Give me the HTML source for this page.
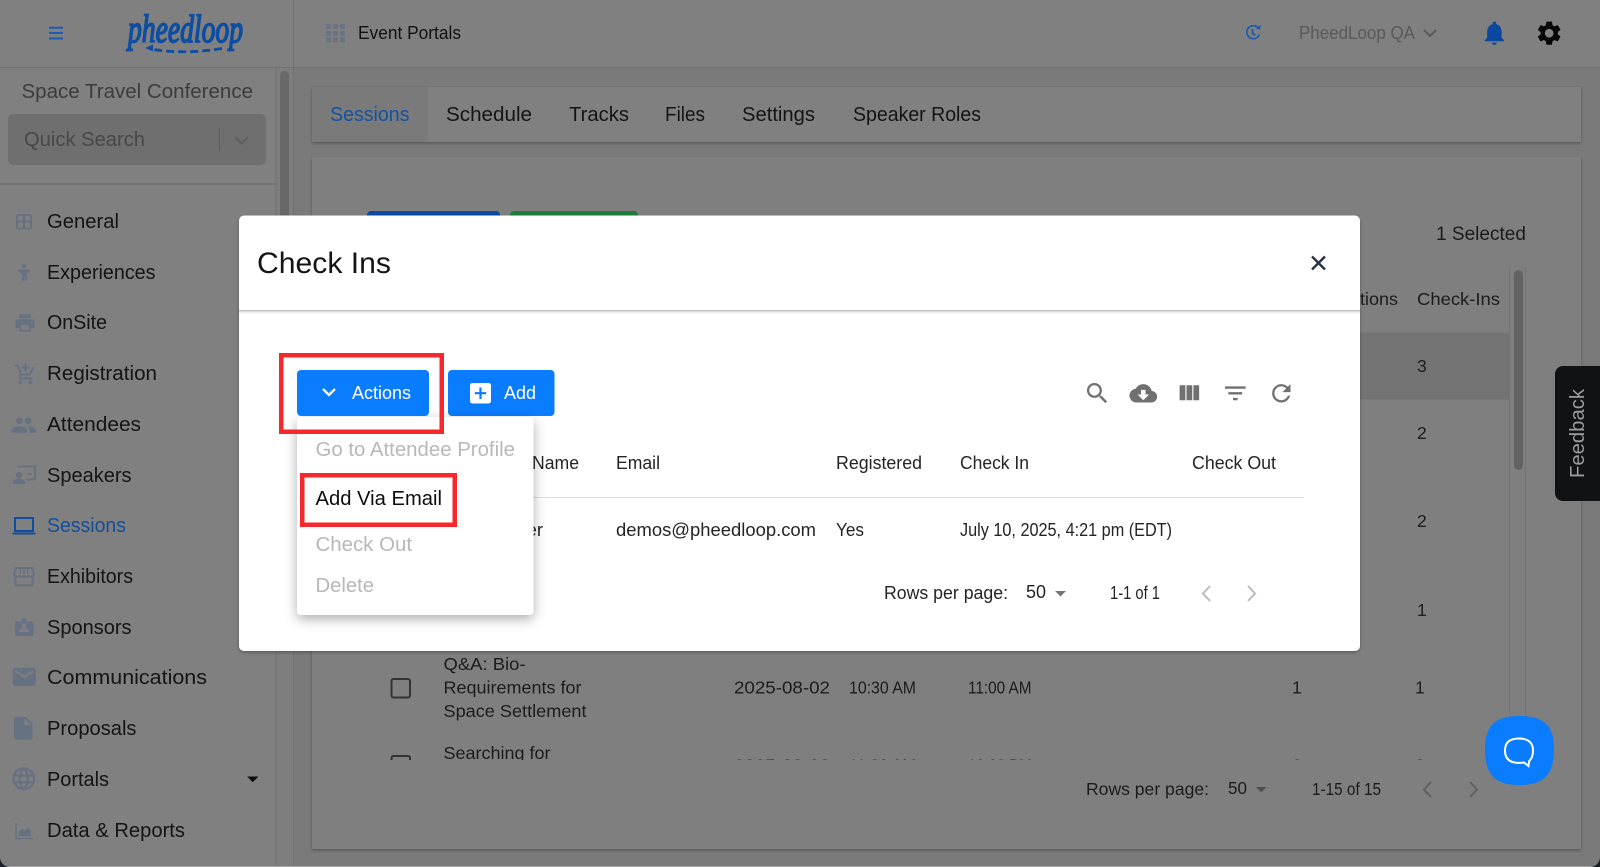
<!DOCTYPE html>
<html lang="en">
<head>
<meta charset="utf-8">
<title>Check Ins</title>
<style>
html,body{margin:0;padding:0;width:1600px;height:867px;overflow:hidden;background:#7a7a7a}
svg{display:block}
text{font-family:"Liberation Sans",sans-serif;font-size:19px;fill:#161616}
.nav{font-size:20.5px;fill:#141414}
.tab{font-size:20.5px;fill:#141414}
.m{font-size:18px;fill:#242424}
.bg{font-size:17.5px;fill:#1c1c1c}
.dis{font-size:20px;fill:#b8b8b8}
.ic{fill:#667282}
</style>
</head>
<body>
<svg xmlns="http://www.w3.org/2000/svg" width="1600" height="867" viewBox="0 0 1600 867">
<defs>
<filter id="s1" x="-5%" y="-5%" width="110%" height="110%"><feDropShadow dx="0" dy="1.5" stdDeviation="1.5" flood-color="#000" flood-opacity=".3"/></filter>
<filter id="s2" x="-15%" y="-15%" width="130%" height="135%"><feDropShadow dx="0" dy="4" stdDeviation="6" flood-color="#000" flood-opacity=".32"/></filter>
<clipPath id="tbl"><rect x="312" y="640" width="1197" height="120"/></clipPath>
</defs>

<!-- backdrop -->
<rect width="1600" height="867" fill="#7a7a7a"/>
<!-- header + sidebar -->
<rect width="1600" height="67" fill="#808080"/>
<rect y="67" width="1600" height="1" fill="#737373"/>
<rect x="293" y="0" width="1" height="67" fill="#737373"/>
<rect y="68" width="276" height="799" fill="#808080"/>
<rect x="275.500" y="68" width="1" height="799" fill="#737373"/>
<rect x="293" y="68" width="1" height="799" fill="#717171"/>
<rect x="276.500" y="68" width="16.500" height="799" fill="#7e7e7e"/>
<rect x="280" y="71" width="9" height="300" rx="4.500" fill="#686868"/>
<rect y="183" width="276" height="2" fill="#747474"/>

<!-- top bar -->
<path d="M49 27.700h14M49 33h14M49 38.500h14" stroke="#1a5cb4" stroke-width="2"/>
<text x="128" y="42" textLength="115" lengthAdjust="spacingAndGlyphs" style="font-family:'Liberation Serif',serif;font-style:italic;font-size:39px;fill:#0e4ea2;stroke:#0e4ea2;stroke-width:1.700">pheedloop</text>
<path d="M222 48.500Q186 54.500 153 49.500" fill="none" stroke="#0e4ea2" stroke-width="2.800" stroke-dasharray="8 4"/>
<path d="M145 48l8-3.500v7z" fill="#0e4ea2"/>
<g fill="#6a7482">
<rect x="326" y="24" width="5" height="5"/><rect x="333" y="24" width="5" height="5"/><rect x="340" y="24" width="5" height="5"/>
<rect x="326" y="31" width="5" height="5"/><rect x="333" y="31" width="5" height="5"/><rect x="340" y="31" width="5" height="5"/>
<rect x="326" y="37.500" width="5" height="5"/><rect x="333" y="37.500" width="5" height="5"/><rect x="340" y="37.500" width="5" height="5"/>
</g>
<text x="358" y="39" textLength="103" lengthAdjust="spacingAndGlyphs" style="font-size:18px;fill:#111">Event Portals</text>
<path d="M1259 29a6.500 6.500 0 1 0 .4 5.500M1252.500 29v4.500l3 1.500" fill="none" stroke="#1a5cb4" stroke-width="1.700"/>
<path d="M1255.500 28.500l4.500 1.200.8-4.700z" fill="#1a5cb4"/>
<text x="1299" y="39" textLength="116" lengthAdjust="spacingAndGlyphs" style="font-size:18.500px;fill:#5a5a5a">PheedLoop QA</text>
<path d="M1424 30l6 6 6-6" fill="none" stroke="#5a5a5a" stroke-width="2"/>
<g transform="translate(1480 18.500) scale(1.2)" fill="#0c479f"><path d="M12 22c1.100 0 2-.9 2-2h-4c0 1.100.89 2 2 2zm6-6v-5c0-3.070-1.640-5.640-4.500-6.320V4c0-.83-.67-1.500-1.500-1.500s-1.500.67-1.500 1.500v.68C7.630 5.360 6 7.920 6 11v5l-2 2v1h16v-1l-2-2z"/></g>
<g transform="translate(1534.800 18.800) scale(1.2)" fill="#050505"><path d="M19.140 12.940c.04-.3.06-.61.06-.94 0-.32-.02-.64-.07-.94l2.030-1.580a.49.49 0 0 0 .12-.61l-1.920-3.320a.488.488 0 0 0-.59-.22l-2.390.96c-.5-.38-1.030-.7-1.620-.94l-.36-2.540a.484.484 0 0 0-.48-.41h-3.840c-.24 0-.43.17-.47.41l-.36 2.540c-.59.24-1.130.57-1.620.94l-2.390-.96c-.22-.08-.47 0-.59.22L2.740 8.870c-.12.21-.08.47.12.61l2.030 1.580c-.05.3-.09.63-.09.94s.02.64.07.94l-2.030 1.580a.49.49 0 0 0-.12.61l1.920 3.320c.12.22.37.29.59.22l2.390-.96c.5.38 1.030.7 1.620.94l.36 2.540c.05.24.24.41.48.41h3.840c.24 0 .44-.17.47-.41l.36-2.540c.59-.24 1.130-.56 1.620-.94l2.390.96c.22.08.47 0 .59-.22l1.920-3.320c.12-.22.07-.47-.12-.61l-2.010-1.580zM12 15.600c-1.980 0-3.600-1.620-3.600-3.600s1.620-3.600 3.600-3.600 3.600 1.620 3.600 3.600-1.620 3.600-3.600 3.600z"/></g>

<!-- sidebar head -->
<text x="21.500" y="98" textLength="231.500" lengthAdjust="spacingAndGlyphs" style="font-size:20.500px;fill:#3c3c3c">Space Travel Conference</text>
<rect x="8" y="114" width="258" height="51" rx="5" fill="#6f6f6f"/>
<text x="24" y="146" textLength="121" lengthAdjust="spacingAndGlyphs" style="font-size:20.500px;fill:#484848">Quick Search</text>
<rect x="219" y="128" width="1" height="23" fill="#5e5e5e"/>
<path d="M235 137l6.500 6.500 6.500-6.500" fill="none" stroke="#5e5e5e" stroke-width="1.800"/>

<!-- sidebar nav -->
<text class="nav" x="47" y="228" textLength="72" lengthAdjust="spacingAndGlyphs">General</text>
<text class="nav" x="47" y="279" textLength="108.500" lengthAdjust="spacingAndGlyphs">Experiences</text>
<text class="nav" x="47" y="329" textLength="60" lengthAdjust="spacingAndGlyphs">OnSite</text>
<text class="nav" x="47" y="380" textLength="110" lengthAdjust="spacingAndGlyphs">Registration</text>
<text class="nav" x="47" y="431" textLength="94" lengthAdjust="spacingAndGlyphs">Attendees</text>
<text class="nav" x="47" y="482" textLength="84.500" lengthAdjust="spacingAndGlyphs">Speakers</text>
<text class="nav" x="47" y="532" textLength="79" lengthAdjust="spacingAndGlyphs" style="fill:#144e98">Sessions</text>
<text class="nav" x="47" y="583" textLength="86" lengthAdjust="spacingAndGlyphs">Exhibitors</text>
<text class="nav" x="47" y="634" textLength="84.500" lengthAdjust="spacingAndGlyphs">Sponsors</text>
<text class="nav" x="47" y="684" textLength="160" lengthAdjust="spacingAndGlyphs">Communications</text>
<text class="nav" x="47" y="735" textLength="89.500" lengthAdjust="spacingAndGlyphs">Proposals</text>
<text class="nav" x="47" y="786" textLength="62" lengthAdjust="spacingAndGlyphs">Portals</text>
<text class="nav" x="47" y="837" textLength="138" lengthAdjust="spacingAndGlyphs">Data &amp; Reports</text>
<path d="M247 776.500h11.500l-5.750 5.750z" fill="#0e0e0e"/>

<!-- sidebar icons -->
<g fill="none" stroke="#667282" stroke-width="2"><rect x="17" y="215" width="14" height="13.500" rx="1.500"/><path d="M24 215v13.500M17 221.500h14"/></g>
<g class="ic"><circle cx="24" cy="266" r="2.300"/><path d="M18.500 269.500h11v2.500l-2.700 1.500v7.500h-2v-5h-.8v5h-2v-7.500l-3.500-1.500z"/></g>
<g class="ic" transform="translate(13.500 311.500) scale(.96)"><path d="M19 8H5c-1.660 0-3 1.340-3 3v6h4v4h12v-4h4v-6c0-1.660-1.340-3-3-3zm-3 11H8v-5h8v5zm3-7c-.55 0-1-.45-1-1s.45-1 1-1 1 .45 1 1-.45 1-1 1zm-1-9H6v4h12V3z"/></g>
<g class="ic" transform="translate(13.500 362.500)"><path d="M11 9h2V6h3V4h-3V1h-2v3H8v2h3v3zm-4 9c-1.100 0-1.990.9-1.990 2S5.900 22 7 22s2-.9 2-2-.9-2-2-2zm10 0c-1.100 0-1.990.9-1.990 2s.89 2 1.990 2 2-.9 2-2-.9-2-2-2zm-9.830-3.250l.03-.12.9-1.630h7.450c.75 0 1.410-.41 1.750-1.030l3.860-7.010L19.420 4h-.01l-1.100 2-2.760 5H8.530l-.13-.27L6.160 6l-.95-2-.94-2H1v2h2l3.600 7.590-1.350 2.450c-.16.28-.25.61-.25.96 0 1.100.9 2 2 2h12v-2H7.420c-.13 0-.25-.11-.25-.25z"/></g>
<g class="ic" transform="translate(10.500 412) scale(1.100)"><path d="M16 11c1.660 0 2.990-1.340 2.990-3S17.660 5 16 5c-1.660 0-3 1.340-3 3s1.340 3 3 3zm-8 0c1.660 0 2.990-1.340 2.990-3S9.660 5 8 5C6.340 5 5 6.340 5 8s1.340 3 3 3zm0 2c-2.330 0-7 1.170-7 3.500V19h14v-2.500c0-2.330-4.670-3.500-7-3.500zm8 0c-.29 0-.62.02-.97.05 1.160.84 1.970 1.970 1.970 3.450V19h6v-2.500c0-2.330-4.670-3.500-7-3.500z"/></g>
<g fill="none" stroke="#667282" stroke-width="2"><path d="M19 468v-1.500h16v13h-8"/></g>
<g class="ic"><circle cx="19" cy="475" r="3.200"/><path d="M13 484v-2c0-2 3-3.500 6-3.500s6 1.500 6 3.500v2z"/><rect x="28" y="473" width="4" height="2"/></g>
<g transform="translate(12 513)" fill="none" stroke="#0e4ea0"><rect x="3" y="5" width="18" height="13" stroke-width="2"/><path d="M.5 20.500h23" stroke-width="2"/></g>
<g fill="none" stroke="#667282" stroke-width="2"><path d="M15.500 576v8.500a1 1 0 0 0 1 1h15a1 1 0 0 0 1-1V576"/><path d="M16 568h16l2 6.500a3 3 0 0 1-5 1.500 4 4 0 0 1-5 0 4 4 0 0 1-5 0 3 3 0 0 1-5-1.500z"/><path d="M20.500 568.500v6M24 568.500v6M27.500 568.500v6" stroke-width="1.200"/></g>
<g class="ic"><path d="M15.500 621.500h6v-3h5v3h6a1.500 1.500 0 0 1 1 1.500v11.500a1.500 1.500 0 0 1-1.500 1.500h-15.500a1.500 1.500 0 0 1-1.500-1.500V623a1.500 1.500 0 0 1 .5-1.500z"/></g>
<circle cx="24" cy="625.500" r="2.300" fill="#808080"/><path d="M19.500 632v-1.500c0-1.200 3-2 4.500-2s4.500.8 4.500 2v1.500z" fill="#808080"/>
<g class="ic" transform="translate(10.500 663) scale(1.150)"><path d="M20 4H4c-1.100 0-1.990.9-1.990 2L2 18c0 1.100.9 2 2 2h16c1.100 0 2-.9 2-2V6c0-1.100-.9-2-2-2zm0 4l-8 5-8-5V6l8 5 8-5v2z"/></g>
<g class="ic" transform="translate(9.500 714.500) scale(1.150)"><path d="M6 2c-1.100 0-1.990.9-1.990 2L4 20c0 1.100.89 2 1.990 2H18c1.100 0 2-.9 2-2V8l-6-6H6zm7 7V3.500L18.500 9H13z"/></g>
<g class="ic" transform="translate(10 765) scale(1.150)"><path d="M11.990 2C6.470 2 2 6.480 2 12s4.470 10 9.990 10C17.520 22 22 17.520 22 12S17.520 2 11.990 2zm6.930 6h-2.950c-.32-1.250-.78-2.450-1.380-3.560 1.840.63 3.370 1.910 4.330 3.560zM12 4.040c.83 1.200 1.480 2.530 1.910 3.960h-3.820c.43-1.430 1.080-2.760 1.910-3.960zM4.260 14C4.100 13.360 4 12.690 4 12s.1-1.360.26-2h3.380c-.08.66-.14 1.320-.14 2 0 .68.06 1.340.14 2H4.260zm.82 2h2.950c.32 1.250.78 2.450 1.380 3.560-1.840-.63-3.370-1.900-4.330-3.560zm2.950-8H5.080c.96-1.660 2.490-2.930 4.330-3.560C8.810 5.550 8.350 6.750 8.030 8zM12 19.960c-.83-1.200-1.480-2.530-1.910-3.960h3.820c-.43 1.430-1.080 2.760-1.910 3.960zM14.340 14H9.660c-.09-.66-.16-1.320-.16-2 0-.68.07-1.350.16-2h4.680c.09.65.16 1.320.16 2 0 .68-.07 1.340-.16 2zm.25 5.560c.6-1.110 1.060-2.310 1.380-3.560h2.950c-.96 1.650-2.490 2.930-4.330 3.560zM16.360 14c.08-.66.14-1.320.14-2 0-.68-.06-1.340-.14-2h3.380c.16.64.26 1.310.26 2s-.1 1.360-.26 2h-3.380z"/></g>
<path d="M16 823v15.500h17" fill="none" stroke="#667282" stroke-width="1.500"/>
<path d="M19 836v-5l3-2 3 1.500 2.500-3 3.500 3.500v5z" fill="#667282"/>

<!-- tabs card -->
<rect x="312" y="87" width="1269" height="55" fill="#808080" filter="url(#s1)"/>
<rect x="312" y="87" width="116" height="55" fill="#7a7a7a"/>
<text class="tab" x="330" y="121" textLength="79.500" lengthAdjust="spacingAndGlyphs" style="fill:#1452a4">Sessions</text>
<text class="tab" x="446" y="121" textLength="86" lengthAdjust="spacingAndGlyphs">Schedule</text>
<text class="tab" x="569" y="121" textLength="60" lengthAdjust="spacingAndGlyphs">Tracks</text>
<text class="tab" x="665" y="121" textLength="40" lengthAdjust="spacingAndGlyphs">Files</text>
<text class="tab" x="742" y="121" textLength="73" lengthAdjust="spacingAndGlyphs">Settings</text>
<text class="tab" x="853" y="121" textLength="128" lengthAdjust="spacingAndGlyphs">Speaker Roles</text>

<!-- main card -->
<rect x="312" y="157" width="1269" height="692" fill="#7f7f7f" filter="url(#s1)"/>
<rect x="367" y="211" width="133" height="12" rx="4" fill="#0c4aa3"/>
<rect x="510" y="211" width="128" height="12" rx="4" fill="#1c7c3a"/>
<text x="1436" y="240" textLength="90" lengthAdjust="spacingAndGlyphs" style="font-size:19.500px;fill:#1c1c1c">1 Selected</text>
<text class="bg" x="1360" y="305" textLength="38" lengthAdjust="spacingAndGlyphs">tions</text>
<text class="bg" x="1417" y="305" textLength="83" lengthAdjust="spacingAndGlyphs">Check-Ins</text>
<rect x="1340" y="332.500" width="169" height="1" fill="#747474"/>
<rect x="1340" y="333.500" width="169" height="66" fill="#737373"/>
<text class="bg" x="1417" y="372">3</text>
<text class="bg" x="1417" y="439">2</text>
<text class="bg" x="1417" y="527">2</text>
<text class="bg" x="1417" y="616">1</text>
<rect x="1509" y="266" width="1" height="494" fill="#757575"/>
<rect x="1525" y="266" width="1" height="494" fill="#757575"/>
<rect x="1514" y="270" width="9" height="200" rx="4.500" fill="#636363"/>

<!-- background table rows -->
<text class="bg" x="443.500" y="670" textLength="82" lengthAdjust="spacingAndGlyphs">Q&amp;A: Bio-</text>
<text class="bg" x="443.500" y="693.500" textLength="138" lengthAdjust="spacingAndGlyphs">Requirements for</text>
<text class="bg" x="443.500" y="717" textLength="143" lengthAdjust="spacingAndGlyphs">Space Settlement</text>
<rect x="391.500" y="679" width="18.500" height="18.500" rx="2" fill="none" stroke="#333" stroke-width="2"/>
<text class="bg" x="734" y="693.500" textLength="96" lengthAdjust="spacingAndGlyphs">2025-08-02</text>
<text class="bg" x="849" y="693.500" textLength="67" lengthAdjust="spacingAndGlyphs">10:30 AM</text>
<text class="bg" x="968" y="693.500" textLength="63.500" lengthAdjust="spacingAndGlyphs">11:00 AM</text>
<text class="bg" x="1292" y="693.500">1</text>
<text class="bg" x="1415" y="693.500">1</text>
<g clip-path="url(#tbl)">
<text class="bg" x="443.500" y="759" textLength="107" lengthAdjust="spacingAndGlyphs">Searching for</text>
<rect x="391.500" y="756" width="18.500" height="18.500" rx="2" fill="none" stroke="#333" stroke-width="2"/>
<text class="bg" x="734" y="771.500" textLength="96" lengthAdjust="spacingAndGlyphs">2025-08-03</text>
<text class="bg" x="849" y="771.500" textLength="67" lengthAdjust="spacingAndGlyphs">11:00 AM</text>
<text class="bg" x="968" y="771.500" textLength="63.500" lengthAdjust="spacingAndGlyphs">12:00 PM</text>
<text class="bg" x="1292" y="771.500">2</text>
<text class="bg" x="1415" y="771.500">2</text>
</g>
<text class="bg" x="1086" y="795" textLength="123" lengthAdjust="spacingAndGlyphs">Rows per page:</text>
<text class="bg" x="1228" y="794" textLength="19" lengthAdjust="spacingAndGlyphs">50</text>
<path d="M1256 787h10.500l-5.250 5.250z" fill="#4e4e4e"/>
<text class="bg" x="1312" y="795" textLength="69" lengthAdjust="spacingAndGlyphs">1-15 of 15</text>
<path d="M1431 782l-7 7.500 7 7.500M1470 782l7 7.500-7 7.500" fill="none" stroke="#5f5f5f" stroke-width="2"/>

<!-- feedback -->
<path d="M1600 366h-37a8 8 0 0 0-8 8v119a8 8 0 0 0 8 8h37z" fill="#111214"/>
<text transform="translate(1584 478) rotate(-90)" textLength="89" lengthAdjust="spacingAndGlyphs" style="font-size:20px;fill:#9c9c9c">Feedback</text>

<!-- chat launcher -->
<path d="M1519.500 716c24 0 34.500 9 34.500 33 0 27-11 36-34.500 36s-34.500-9-34.500-36c0-24 10.500-33 34.500-33z" fill="#0a7cff"/>
<path d="M1519 738.500c9 0 14 4 14 12 0 5-1.500 8.500-3.800 10.500l-.7 5-4.500-3.500c-1.500.3-3.200.4-5 .4-9 0-14-4-14-12.400s5-12 14-12z" fill="none" stroke="#fff" stroke-width="2"/>

<!-- modal -->
<rect x="239" y="215.500" width="1121" height="435.500" rx="5" fill="#fff" filter="url(#s1)"/>
<rect x="239" y="310" width="1121" height="1.500" fill="#c4c4c4"/>
<rect x="239" y="311.500" width="1121" height="2" fill="#eeeeee"/>
<text x="257" y="273" textLength="134" lengthAdjust="spacingAndGlyphs" style="font-size:30px;fill:#141414">Check Ins</text>
<path d="M1312 256.500l13 13M1325 256.500l-13 13" stroke="#26324a" stroke-width="2.400"/>

<!-- modal table -->
<text class="m" x="532" y="469" textLength="47" lengthAdjust="spacingAndGlyphs">Name</text>
<text class="m" x="616" y="469" textLength="44" lengthAdjust="spacingAndGlyphs">Email</text>
<text class="m" x="836" y="469" textLength="86" lengthAdjust="spacingAndGlyphs">Registered</text>
<text class="m" x="960" y="469" textLength="69" lengthAdjust="spacingAndGlyphs">Check In</text>
<text class="m" x="1192" y="469" textLength="84" lengthAdjust="spacingAndGlyphs">Check Out</text>
<rect x="296" y="497" width="1008" height="1" fill="#dfdfdf"/>
<text class="m" x="450" y="536" textLength="93" lengthAdjust="spacingAndGlyphs">Demo User</text>
<text class="m" x="616" y="536" textLength="200" lengthAdjust="spacingAndGlyphs">demos@pheedloop.com</text>
<text class="m" x="836" y="536" textLength="28" lengthAdjust="spacingAndGlyphs">Yes</text>
<text class="m" x="960" y="536" textLength="212" lengthAdjust="spacingAndGlyphs">July 10, 2025, 4:21 pm (EDT)</text>
<text class="m" x="884" y="599" textLength="124" lengthAdjust="spacingAndGlyphs">Rows per page:</text>
<text class="m" x="1026" y="598" textLength="20" lengthAdjust="spacingAndGlyphs">50</text>
<path d="M1055 591h11l-5.500 5.500z" fill="#757575"/>
<text class="m" x="1110" y="599" textLength="50" lengthAdjust="spacingAndGlyphs">1-1 of 1</text>
<path d="M1210 586l-7 7.500 7 7.500M1248 586l7 7.500-7 7.500" fill="none" stroke="#bcbcbc" stroke-width="2"/>

<!-- toolbar icons -->
<g fill="#707070">
<g transform="translate(1083.500 379.500) scale(1.150)"><path d="M15.500 14h-.79l-.28-.27A6.471 6.471 0 0 0 16 9.500 6.500 6.500 0 1 0 9.500 16c1.610 0 3.090-.59 4.230-1.570l.27.280v.79l5 4.990L20.490 19l-4.990-5zm-6 0C7.010 14 5 11.990 5 9.500S7.010 5 9.500 5 14 7.010 14 9.500 11.990 14 9.500 14z"/></g>
<g transform="translate(1129.500 379.500) scale(1.150)"><path d="M19.350 10.040C18.670 6.590 15.640 4 12 4 9.110 4 6.600 5.640 5.350 8.040 2.340 8.360 0 10.910 0 14c0 3.310 2.690 6 6 6h13c2.760 0 5-2.240 5-5 0-2.640-2.050-4.780-4.650-4.960zM17 13l-5 5-5-5h3V9h4v4h3z"/></g>
<g transform="translate(1175 379.500) scale(1.150)"><path d="M10 18h5V5h-5v13zm-6 0h5V5H4v13zM16 5v13h5V5h-5z"/></g>
<g transform="translate(1221.500 379.500) scale(1.150)"><path d="M10 18h4v-2h-4v2zM3 6v2h18V6H3zm3 7h12v-2H6v2z"/></g>
<g transform="translate(1267.500 379.500) scale(1.150)"><path d="M17.650 6.350C16.200 4.900 14.210 4 12 4c-4.420 0-7.990 3.580-7.990 8s3.570 8 7.990 8c3.730 0 6.840-2.550 7.730-6h-2.080c-.82 2.330-3.040 4-5.650 4-3.310 0-6-2.690-6-6s2.690-6 6-6c1.660 0 3.140.69 4.220 1.780L13 11h7V4l-2.350 2.350z"/></g>
</g>

<!-- Add button -->
<rect x="448" y="370" width="106.500" height="46" rx="4" fill="#0a7cff"/>
<rect x="470" y="383" width="21" height="20.500" rx="2.500" fill="#fff"/>
<path d="M480.500 387.500v11.500M474.800 393.200h11.400" stroke="#0a7cff" stroke-width="2.200"/>
<text x="504" y="399" textLength="32" lengthAdjust="spacingAndGlyphs" style="font-size:18px;fill:#fff">Add</text>

<!-- dropdown -->
<rect x="297" y="417" width="236.500" height="198" rx="4" fill="#fff" filter="url(#s2)"/>
<text class="dis" x="315.500" y="456" textLength="199.500" lengthAdjust="spacingAndGlyphs">Go to Attendee Profile</text>
<text x="315.500" y="505" textLength="126.500" lengthAdjust="spacingAndGlyphs" style="font-size:20px;fill:#0c0c0c">Add Via Email</text>
<text class="dis" x="315.500" y="551" textLength="96.500" lengthAdjust="spacingAndGlyphs">Check Out</text>
<text class="dis" x="315.500" y="592" textLength="58.500" lengthAdjust="spacingAndGlyphs">Delete</text>

<!-- Actions button -->
<rect x="297" y="370" width="132" height="46" rx="4" fill="#0a7cff"/>
<path d="M323 389l6 6 6-6" fill="none" stroke="#fff" stroke-width="2.300"/>
<text x="352" y="399" textLength="59" lengthAdjust="spacingAndGlyphs" style="font-size:18px;fill:#fff">Actions</text>

<!-- red annotation boxes -->
<rect x="281.250" y="355.250" width="160.500" height="76.500" fill="none" stroke="#f6282b" stroke-width="4.500"/>
<rect x="302.250" y="475.250" width="152.500" height="49.500" fill="none" stroke="#f6282b" stroke-width="4.500"/>

<!-- window edge -->
<rect y="866" width="1600" height="1" fill="#a8a8a8"/>
<path d="M0 867v-10a10 10 0 0 0 10 10zM1600 867v-10a10 10 0 0 1-10 10z" fill="#1a2028"/>
</svg>
</body>
</html>
